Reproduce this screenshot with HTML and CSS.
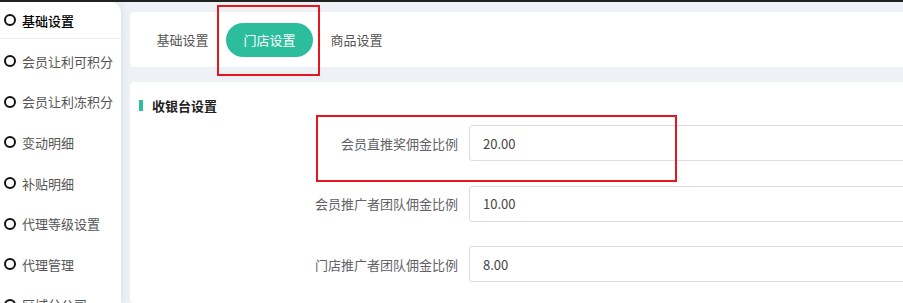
FILE: index.html
```html
<!DOCTYPE html>
<html lang="zh-CN">
  <head>
    <meta charset="UTF-8" />
    <meta name="viewport" content="width=device-width, initial-scale=1.0" />
    <title>门店设置</title>
    <link rel="stylesheet" href="styles.css">
  </head>

  <body>
    <div class="topbar"></div>

    <div class="layout">
      <aside class="sidebar">
        <ul class="menu">
          <li class="menu-item active"><span class="dot"></span>基础设置</li>
          <li class="menu-item"><span class="dot"></span>会员让利可积分</li>
          <li class="menu-item"><span class="dot"></span>会员让利冻积分</li>
          <li class="menu-item"><span class="dot"></span>变动明细</li>
          <li class="menu-item"><span class="dot"></span>补贴明细</li>
          <li class="menu-item"><span class="dot"></span>代理等级设置</li>
          <li class="menu-item"><span class="dot"></span>代理管理</li>
          <li class="menu-item"><span class="dot"></span>区域分公司</li>
        </ul>
      </aside>

      <main class="content">
        <section class="card tabs-card">
          <button class="tab">基础设置</button>
          <button class="tab tab-active">门店设置</button>
          <button class="tab">商品设置</button>
        </section>

        <section class="card form-card">
          <h2 class="section-title"><span class="bar"></span>收银台设置</h2>

          <form class="form">
            <div class="form-row">
              <label class="form-label" for="direct">会员直推奖佣金比例</label>
              <input class="form-input" id="direct" type="text" value="20.00" />
            </div>
            <div class="form-row">
              <label class="form-label" for="member">会员推广者团队佣金比例</label>
              <input class="form-input" id="member" type="text" value="10.00" />
            </div>
            <div class="form-row">
              <label class="form-label" for="store">门店推广者团队佣金比例</label>
              <input class="form-input" id="store" type="text" value="8.00" />
            </div>
          </form>
        </section>
      </main>
    </div>

    <div class="mark mark-tab"></div>
    <div class="mark mark-field"></div>
  </body>
</html>
```

FILE: styles.css
```css
html,
body {
  margin: 0;
  padding: 0;
  height: 100%;
}

body {
  position: relative;
  overflow: hidden;
  background: #eef1f5;
  font-family: "Noto Sans CJK SC", "Liberation Sans", sans-serif;
  font-size: 13px;
  color: #606266;
}

.topbar {
  height: 2px;
  background: #222;
}

.layout {
  display: flex;
  height: calc(100% - 2px);
  overflow: hidden;
}

.sidebar {
  width: 121px;
  flex-shrink: 0;
  background: #fff;
  border-top-right-radius: 10px;
  box-shadow: 2px 0 7px rgba(40, 50, 70, 0.08);
  overflow: hidden;
}

.menu {
  list-style: none;
  margin: 0;
  padding: 0;
}

.menu-item {
  display: flex;
  align-items: center;
  height: 40.6px;
  padding-left: 4px;
  color: #555;
  white-space: nowrap;
}

.menu-item.active {
  height: 36px;
  margin-bottom: 2px;
  border-bottom: 1px solid #ebebf2;
  color: #000;
  font-weight: 500;
}

.dot {
  width: 8px;
  height: 8px;
  border: 2px solid #111;
  border-radius: 50%;
  margin-right: 6px;
}

.content {
  display: flex;
  flex-direction: column;
  flex-grow: 1;
  padding: 10px 0 0 9px;
  min-width: 0;
}

.card {
  background: #fff;
  border-radius: 4px 0 0 4px;
}

.tabs-card {
  display: flex;
  align-items: center;
  flex-shrink: 0;
  height: 55px;
  padding-left: 9px;
  margin-bottom: 15px;
}

.tab {
  border: none;
  background: none;
  height: 34px;
  padding: 0 17.5px;
  border-radius: 17px;
  font-family: inherit;
  font-size: 13px;
  color: #555;
  cursor: pointer;
}

.tab-active {
  background: #2bbd9c;
  color: #fff;
}

.form-card {
  flex-grow: 1;
  padding: 12px 0 0 9px;
  overflow: hidden;
}

.section-title {
  display: flex;
  align-items: center;
  margin: 0 0 9px;
  height: 22px;
  font-size: 13px;
  font-weight: bold;
  color: #222;
}

.bar {
  width: 4px;
  height: 11px;
  background: #2bbd9c;
  margin-right: 9px;
}

.form-row {
  display: flex;
  align-items: center;
  margin-bottom: 24.5px;
}

.form-label {
  flex-shrink: 0;
  width: 319px;
  padding-right: 11px;
  text-align: right;
  color: #606266;
  white-space: nowrap;
}

.form-input {
  flex-shrink: 0;
  width: 600px;
  height: 36px;
  box-sizing: border-box;
  border: 1px solid #dcdce6;
  border-radius: 3px;
  padding: 0 13px;
  font-family: inherit;
  font-size: 13px;
  color: #444;
  outline: none;
}

.mark {
  position: absolute;
  border: 2px solid #e5161e;
  box-sizing: border-box;
}

.mark-tab {
  left: 217px;
  top: 5px;
  width: 103px;
  height: 71px;
}

.mark-field {
  left: 316px;
  top: 115px;
  width: 361px;
  height: 67px;
}
```
